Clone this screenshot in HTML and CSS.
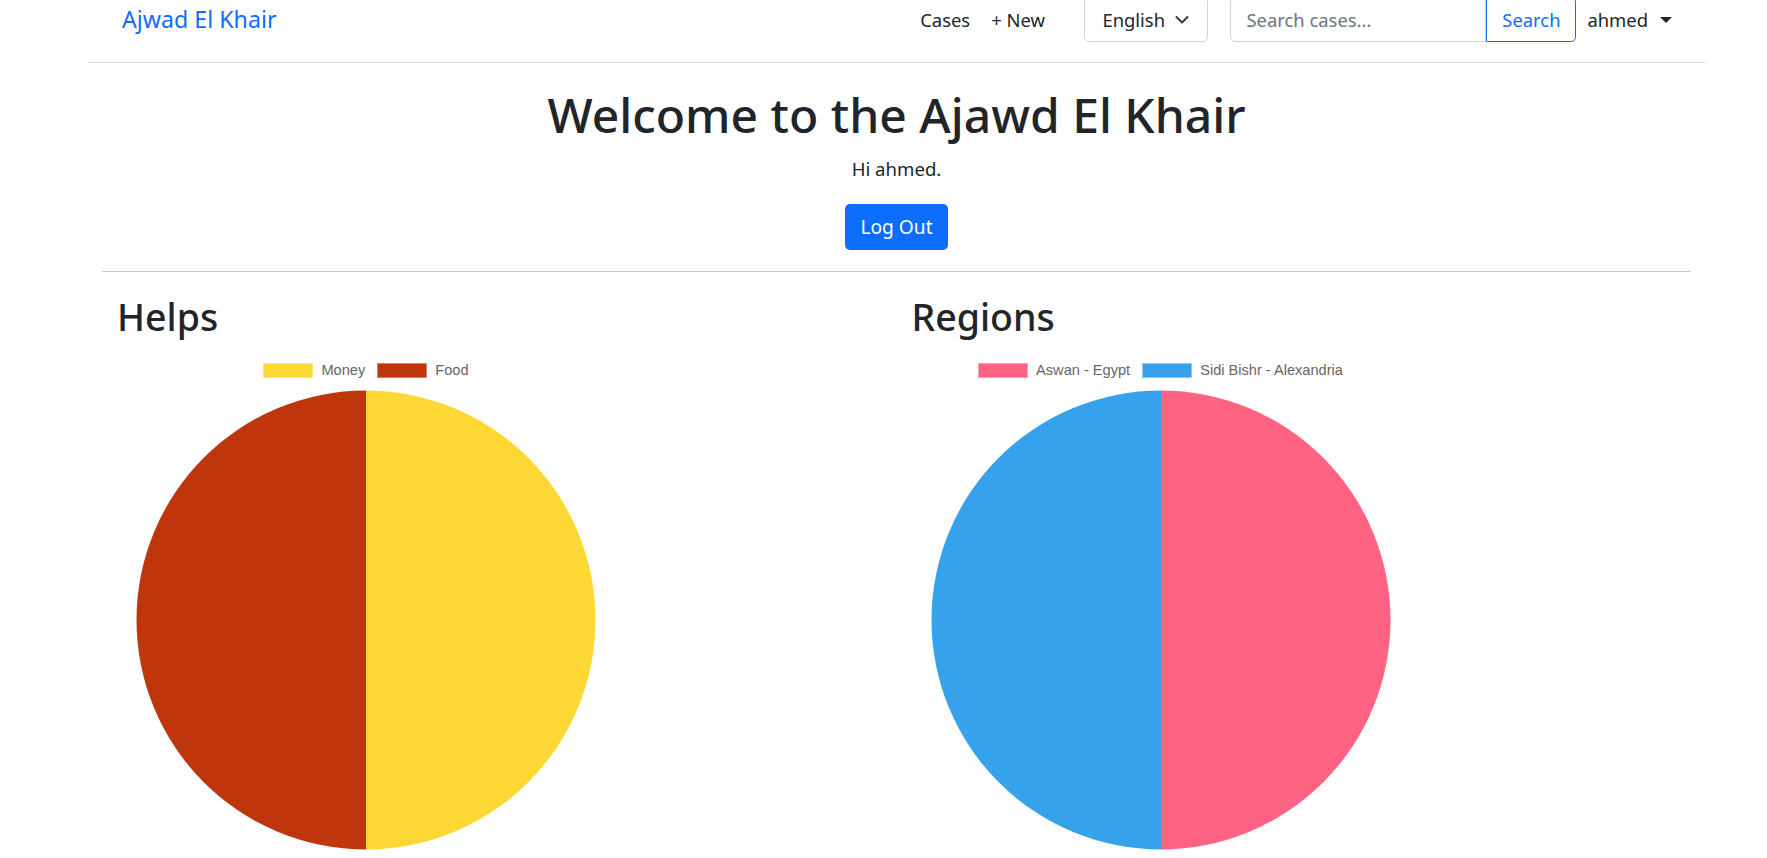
FILE: index.html
```html
<!DOCTYPE html>
<html lang="en">
<head>
<meta charset="utf-8">
<title>Ajwad El Khair</title>
<link rel="stylesheet" href="styles.css">
</head>
<body>
<div class="page">
  <nav class="navbar">
    <a class="brand" href="#">Ajwad El Khair</a>
    <div class="nav-right">
      <div class="nav-links">
        <a class="nav-link" href="#">Cases</a>
        <a class="nav-link" href="#">+ New</a>
      </div>
      <div class="lang-select">
        <span>English</span>
        <svg class="chevron" width="14" height="10" viewBox="0 0 14 10"><path d="M1.5 2 7 7.5 12.5 2" fill="none" stroke="#343a40" stroke-width="2" stroke-linecap="round" stroke-linejoin="round"/></svg>
      </div>
      <form class="search">
        <input type="text" placeholder="Search cases...">
        <button type="button" class="search-btn">Search</button>
      </form>
      <div class="user">
        <span>ahmed</span>
        <span class="caret"></span>
      </div>
    </div>
  </nav>

  <main class="main">
    <section class="hero">
      <h1 class="title">Welcome to the Ajawd El Khair</h1>
      <p class="greet">Hi ahmed.</p>
      <button type="button" class="btn-logout">Log Out</button>
    </section>
    <hr class="divider">
    <div class="row">
      <div class="col">
        <h2 class="chart-title">Helps</h2>
        <div class="chart">
          <div class="legend">
            <span class="legend-item"><span class="swatch swatch-money"></span><span>Money</span></span>
            <span class="legend-item"><span class="swatch swatch-food"></span><span>Food</span></span>
          </div>
          <svg class="pie" width="498" height="460" viewBox="0 0 498 460">
            <path d="M249 230 L249 0.5 A229.5 229.5 0 0 1 249 459.5 Z" fill="#fdd835"/>
            <path d="M249 230 L249 459.5 A229.5 229.5 0 0 1 249 0.5 Z" fill="#bf360c"/>
          </svg>
        </div>
      </div>
      <div class="col">
        <h2 class="chart-title">Regions</h2>
        <div class="chart">
          <div class="legend">
            <span class="legend-item"><span class="swatch swatch-aswan"></span><span>Aswan - Egypt</span></span>
            <span class="legend-item"><span class="swatch swatch-sidi"></span><span>Sidi Bishr - Alexandria</span></span>
          </div>
          <svg class="pie" width="498" height="460" viewBox="0 0 498 460">
            <path d="M249 230 L249 0.5 A229.5 229.5 0 0 1 249 459.5 Z" fill="#ff6384"/>
            <path d="M249 230 L249 459.5 A229.5 229.5 0 0 1 249 0.5 Z" fill="#36a2eb"/>
          </svg>
        </div>
      </div>
    </div>
  </main>
</div>
</body>
</html>
```

FILE: styles.css
```css
html, body {
  margin: 0;
  padding: 0;
}

body {
  font-family: "Noto Sans", "Open Sans", sans-serif;
  font-size: 19.2px;
  line-height: 1.5;
  color: #212529;
  background: #fff;
}

.page {
  margin-top: -22px;
}

.navbar {
  width: 1619px;
  margin-left: 87px;
  box-sizing: border-box;
  padding: 19px 34px 20px 35px;
  border-bottom: 1px solid #e0e2e4;
  display: flex;
  align-items: center;
  font-size: 18.4px;
}

.brand {
  font-size: 23.2px;
  line-height: 45px;
  color: #0d6efd;
  text-decoration: none;
}

.nav-right {
  margin-left: auto;
  display: flex;
  align-items: center;
}

.nav-links {
  display: flex;
}

.nav-link {
  padding: 0 10.5px;
  color: #212529;
  text-decoration: none;
  line-height: 45px;
}

.lang-select {
  margin-left: 29px;
  width: 124px;
  height: 45px;
  box-sizing: border-box;
  border: 1px solid #ced4da;
  border-radius: 5px;
  display: flex;
  align-items: center;
  justify-content: space-between;
  padding: 0 18px 0 17px;
}

.chevron {
  display: block;
}

.search {
  margin: 0 0 0 22px;
  display: flex;
}

.search input {
  width: 256px;
  height: 45px;
  box-sizing: border-box;
  border: 1px solid #ced4da;
  border-radius: 5px 0 0 5px;
  padding: 0 15px;
  font: inherit;
  color: #212529;
  outline: none;
}

.search input::placeholder {
  color: #6c757d;
}

.search-btn {
  width: 90px;
  height: 45px;
  box-sizing: border-box;
  border: 1px solid #0d6efd;
  border-radius: 0 5px 5px 0;
  background: #fff;
  color: #0d6efd;
  font: inherit;
  padding: 0;
}

.user {
  margin-left: 11px;
  display: flex;
  align-items: center;
  gap: 12px;
  line-height: 45px;
}

.caret {
  width: 0;
  height: 0;
  border-top: 6px solid #212529;
  border-left: 6px solid transparent;
  border-right: 6px solid transparent;
}

.main {
  width: 1619px;
  margin-left: 87px;
  box-sizing: border-box;
  padding: 0 15px;
}

.hero {
  text-align: center;
}

.title {
  font-size: 48px;
  font-weight: 500;
  line-height: 57.6px;
  margin: 22.6px 0 12px;
}

.greet {
  margin: 0 0 20px;
  font-size: 18.6px;
  line-height: 28.8px;
}

.btn-logout {
  width: 103px;
  height: 46px;
  padding: 0;
  border: none;
  border-radius: 5px;
  background: #0d6efd;
  color: #fff;
  font: inherit;
}

.divider {
  margin: 21px 0 0;
  border: 0;
  border-top: 1px solid #c8c9ca;
}

.row {
  display: flex;
}

.col {
  width: 50%;
  box-sizing: border-box;
  padding-left: 15px;
}

.chart-title {
  font-size: 37.5px;
  font-weight: 500;
  line-height: 45px;
  margin: 22.5px 0 0;
  padding-bottom: 1.8px;
}

.chart {
  width: 498px;
}

.legend {
  display: flex;
  justify-content: center;
  gap: 12px;
  height: 15px;
  margin-top: 21.7px;
  font-family: "Liberation Sans", Arial, sans-serif;
  font-size: 14.6px;
  line-height: 15px;
  color: #666;
}

.legend-item {
  display: flex;
  align-items: center;
  gap: 8px;
}

.swatch {
  width: 50px;
  height: 15px;
  box-sizing: border-box;
}

.swatch-money { background: #fdd835; border: 1px solid #fde58a; }
.swatch-food { background: #bf360c; border: 1px solid #d9826a; }
.swatch-aswan { background: #ff6384; border: 1px solid #ff9db2; }
.swatch-sidi { background: #36a2eb; border: 1px solid #8cc8f3; }

.pie {
  display: block;
  margin-top: 12.5px;
}
```
